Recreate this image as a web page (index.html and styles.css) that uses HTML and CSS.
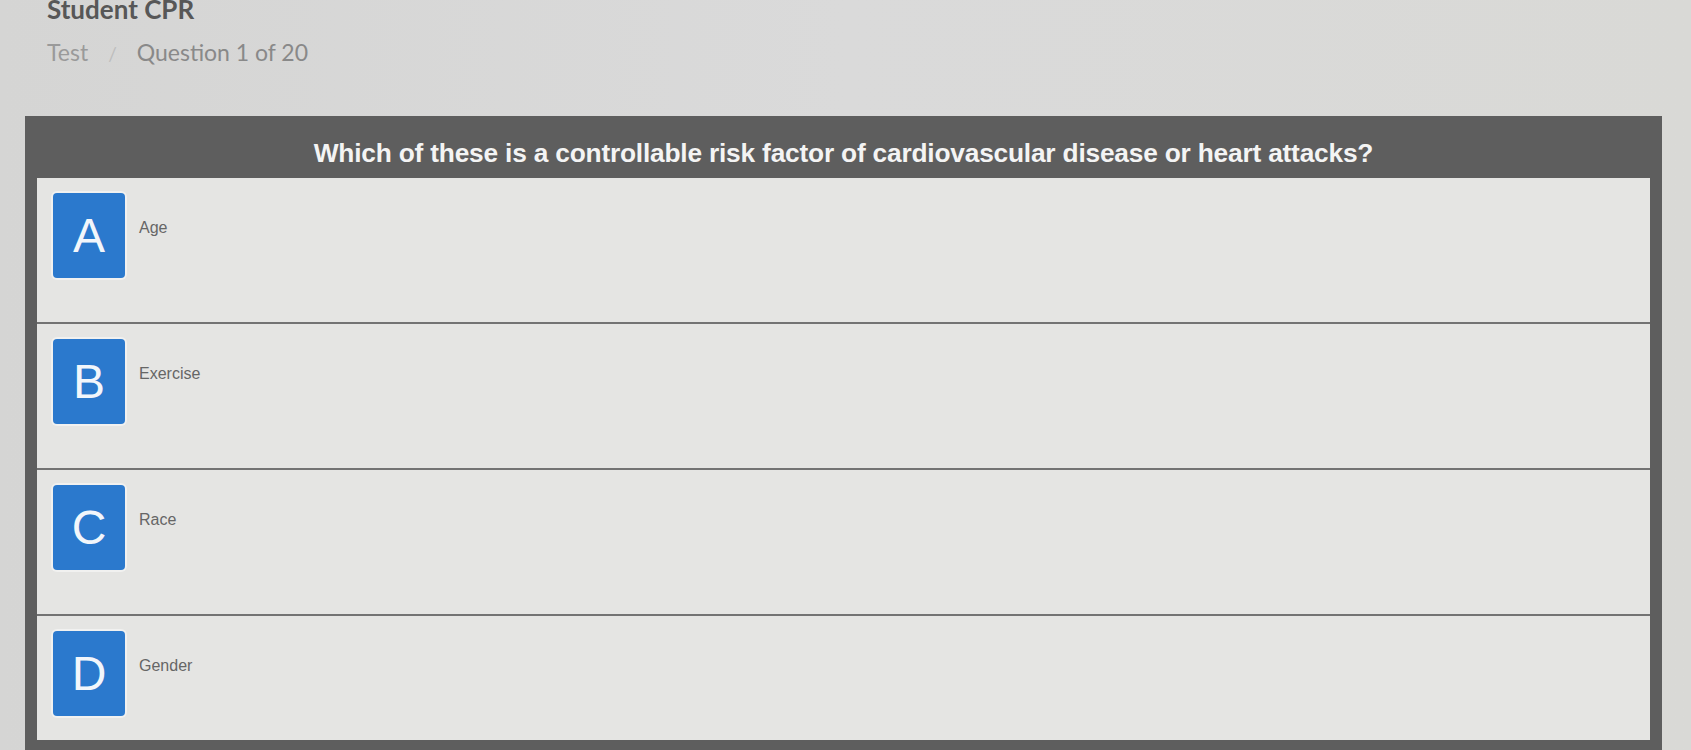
FILE: index.html
```html
<!DOCTYPE html>
<html lang="en">
<head>
<meta charset="utf-8">
<title>Student CPR - Test</title>
<link rel="stylesheet" href="styles.css">
</head>
<body>
<div class="page">
  <header class="top">
    <h1 class="title">Student CPR</h1>
    <nav class="crumbs">
      <span class="crumb">Test</span>
      <span class="sep">/</span>
      <span class="crumb current">Question 1 of 20</span>
    </nav>
  </header>
  <section class="card">
    <div class="question">Which of these is a controllable risk factor of cardiovascular disease or heart attacks?</div>
    <div class="options">
      <div class="option">
        <div class="letter">A</div>
        <div class="answer">Age</div>
      </div>
      <div class="option">
        <div class="letter">B</div>
        <div class="answer">Exercise</div>
      </div>
      <div class="option">
        <div class="letter">C</div>
        <div class="answer">Race</div>
      </div>
      <div class="option last">
        <div class="letter">D</div>
        <div class="answer">Gender</div>
      </div>
    </div>
  </section>
</div>
</body>
</html>
```
FILE: styles.css
```css
html, body {
  margin: 0;
  padding: 0;
  height: 100%;
  overflow: hidden;
}
body {
  background: linear-gradient(90deg, #d5d5d4 0%, #dadada 50%, #d9d9d6 100%);
  font-family: "Liberation Sans", Arial, sans-serif;
}
.page {
  padding: 0 29px 0 25px;
}
.top {
  display: flow-root;
  padding-left: 22px;
  height: 116px;
  box-sizing: border-box;
}
.title {
  margin: -3px 0 0;
  font-family: Lato, "Open Sans", sans-serif;
  font-weight: 700;
  font-size: 26px;
  line-height: 24px;
  color: #575757;
}
.crumbs {
  display: flex;
  align-items: baseline;
  gap: 20px;
  margin-top: 17px;
  font-family: Lato, "Open Sans", sans-serif;
  font-size: 23px;
  color: #9a9a9a;
}
.crumb.current {
  color: #898989;
}
.sep {
  color: #bdbdbd;
  font-size: 19px;
}
.card {
  border: 12px solid #5e5e5e;
  border-top: 0;
  background: #e5e5e3;
}
.question {
  background: #5e5e5e;
  color: #f4f4f4;
  font-weight: 700;
  font-size: 26.3px;
  height: 62px;
  padding-top: 12px;
  box-sizing: border-box;
  display: flex;
  align-items: center;
  justify-content: center;
  letter-spacing: -0.2px;
}
.options {
  display: flex;
  flex-direction: column;
}
.option {
  display: flex;
  align-items: flex-start;
  gap: 14px;
  height: 146px;
  box-sizing: border-box;
  padding: 15px 0 0 16px;
  border-bottom: 2px solid #737373;
}
.option.last {
  border-bottom: 0;
  height: 124px;
}
.letter {
  width: 72px;
  height: 85px;
  border-radius: 4px;
  background: #2b79cd;
  color: #f2f6fb;
  font-size: 48px;
  font-weight: 400;
  display: flex;
  align-items: center;
  justify-content: center;
  box-shadow: 0 0 0 2px rgba(255, 255, 255, 0.45);
}
.answer {
  margin-top: 26px;
  font-size: 16px;
  line-height: 18px;
  color: #666666;
}
```
